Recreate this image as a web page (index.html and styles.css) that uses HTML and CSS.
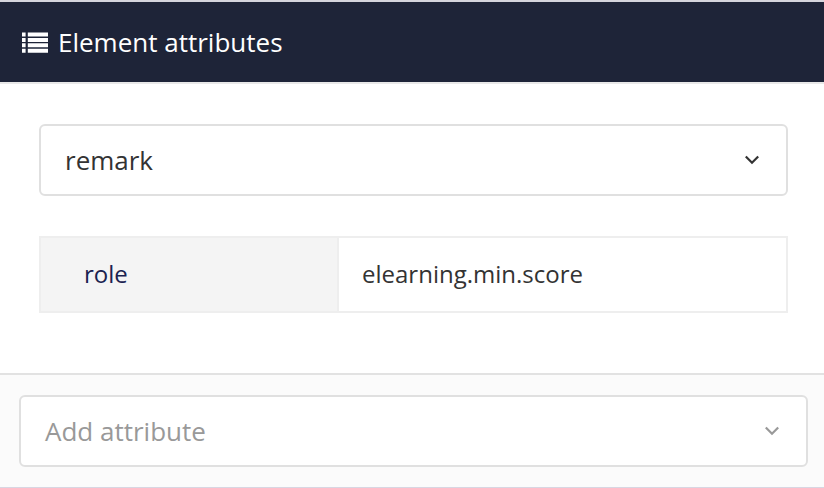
FILE: index.html
```html
<!DOCTYPE html>
<html lang="en">
<head>
<meta charset="utf-8">
<title>Element attributes</title>
<link rel="stylesheet" href="styles.css">
</head>
<body>
<div class="panel">
  <header class="head">
    <svg class="list-icon" width="26" height="21" viewBox="0 0 26 21" aria-hidden="true">
      <path fill="#fff" d="M0 .5h3.6v4H0zM5.8 .5H26v4H5.8zM0 6h3.6v4H0zM5.8 6H26v4H5.8zM0 11.3h3.6v4H0zM5.8 11.3H26v4H5.8zM0 16.7h3.6v4H0zM5.8 16.7H26v4H5.8z"/>
    </svg>
    <span class="title">Element attributes</span>
  </header>
  <main class="body">
    <div class="select">
      <span>remark</span>
      <svg class="chev" width="16" height="10" viewBox="0 0 16 10" aria-hidden="true"><path d="M1.8 1.5 8 7.7l6.2-6.2" fill="none" stroke="#333" stroke-width="2.2"/></svg>
    </div>
    <div class="attr">
      <div class="attr-key">role</div>
      <div class="attr-val">elearning.min.score</div>
    </div>
  </main>
  <footer class="foot">
    <div class="select select-add">
      <span>Add attribute</span>
      <svg class="chev" width="16" height="10" viewBox="0 0 16 10" aria-hidden="true"><path d="M1.8 1.5 8 7.7l6.2-6.2" fill="none" stroke="#999" stroke-width="2.2"/></svg>
    </div>
  </footer>
</div>
</body>
</html>
```
FILE: styles.css
```css
* { box-sizing: border-box; }
html, body { margin: 0; padding: 0; background: #fff; }
.panel {
  width: 824px;
  height: 488px;
  display: flex;
  flex-direction: column;
  font-family: "Open Sans", sans-serif;
  font-size: 24px;
  color: #333;
  border-bottom: 1px solid #d8d6e2;
}
.head {
  height: 84px;
  flex: none;
  display: flex;
  align-items: center;
  gap: 10px;
  padding-left: 22px;
  background: #1e2438;
  border-top: 2px solid #d5d5dc;
  border-bottom: 2px solid #e8e8e8;
  color: #fff;
}
.list-icon { flex: none; }
.title { font-size: 26px; line-height: 32px; }
.body {
  flex: 1;
  padding: 40px 36px 0 39px;
}
.select {
  height: 72px;
  display: flex;
  align-items: center;
  justify-content: space-between;
  padding: 0 26px 0 24px;
  background: #fff;
  border: 2px solid #e0e0e0;
  border-radius: 6px;
  font-size: 26px;
}
.attr {
  display: flex;
  height: 77px;
  margin-top: 40px;
  border: 2px solid #eee;
}
.attr-key {
  width: 296px;
  flex: none;
  display: flex;
  align-items: center;
  padding: 0 0 2px 43px;
  background: #f4f4f4;
  color: #1b2250;
}
.attr-val {
  flex: 1;
  display: flex;
  align-items: center;
  padding: 0 0 2px 23px;
  border-left: 2px solid #eee;
}
.foot {
  height: 114px;
  flex: none;
  padding: 20px 16px 0 19px;
  background: #fbfbfb;
  border-top: 2px solid #e2e2e2;
}
.select-add {
  height: 72px;
  color: #999;
}
```
